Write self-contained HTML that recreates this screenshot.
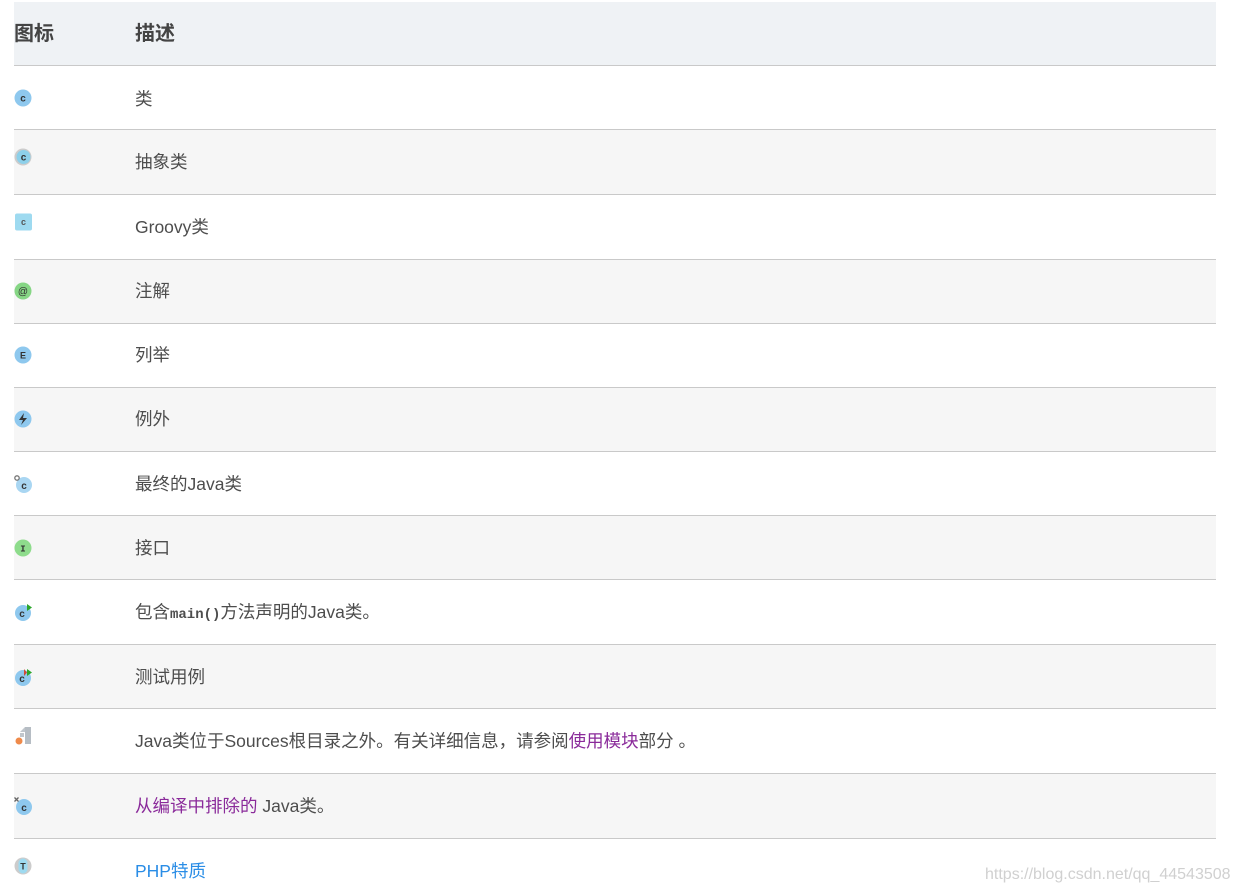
<!DOCTYPE html>
<html><head><meta charset="utf-8"><style>
body{margin:0;width:1239px;height:894px;background:#fff;position:relative;overflow:hidden;font-family:"Liberation Sans","Noto Sans CJK SC",sans-serif;color:#4d4d4d}
.r{position:absolute;left:14px;width:1202px;border-bottom:1px solid #c9c9c9}
.t{position:absolute;left:135px;font-size:17.5px;line-height:20px}
.i{position:absolute;left:14px;width:18px;height:18px}
.wm{position:absolute;left:985px;top:866px;font-size:16px;color:#d0d0d0}
a{color:#8a2a9a;text-decoration:none}
</style></head><body>
<div class="r" style="top:2px;height:63px;background:#eff2f5"></div>
<div class="t" style="left:14px;top:24px;font-weight:bold;font-size:20px;color:#444">图标</div>
<div class="t" style="top:24px;font-weight:bold;font-size:20px;color:#444">描述</div>

<div class="r" style="top:66px;height:63px"></div>
<div class="r" style="top:130px;height:64px;background:#f6f6f6"></div>
<div class="r" style="top:195px;height:64px"></div>
<div class="r" style="top:260px;height:63px;background:#f6f6f6"></div>
<div class="r" style="top:324px;height:63px"></div>
<div class="r" style="top:388px;height:63px;background:#f6f6f6"></div>
<div class="r" style="top:452px;height:63px"></div>
<div class="r" style="top:516px;height:63px;background:#f6f6f6"></div>
<div class="r" style="top:580px;height:64px"></div>
<div class="r" style="top:645px;height:63px;background:#f6f6f6"></div>
<div class="r" style="top:709px;height:64px"></div>
<div class="r" style="top:774px;height:64px;background:#f6f6f6"></div>

<svg class="i" style="top:89px" viewBox="0 0 18 18"><circle cx="9" cy="9" r="8.5" fill="#8ec8ee"/><text x="9" y="12.5" font-size="10" font-weight="bold" text-anchor="middle" fill="#333" font-family="Liberation Sans">c</text></svg>
<div class="t" style="top:89px">类</div>

<svg class="i" style="top:148px" viewBox="0 0 18 18"><circle cx="9" cy="9" r="8.5" fill="#ccc"/><circle cx="9.5" cy="9" r="7" fill="#8dd0ea"/><text x="9.5" y="12.5" font-size="10" font-weight="bold" text-anchor="middle" fill="#333" font-family="Liberation Sans">c</text></svg>
<div class="t" style="top:152px">抽象类</div>

<svg class="i" style="top:213px" viewBox="0 0 18 18"><rect x="1" y="0.5" width="17" height="17" rx="2" fill="#9edaf0"/><text x="9.5" y="12" font-size="9" font-weight="bold" text-anchor="middle" fill="#555" font-family="Liberation Sans">c</text></svg>
<div class="t" style="top:217px">Groovy类</div>

<svg class="i" style="top:282px" viewBox="0 0 18 18"><circle cx="9" cy="9" r="8.5" fill="#86d685"/><text x="9" y="12.5" font-size="10" text-anchor="middle" fill="#333" font-family="Liberation Sans">@</text></svg>
<div class="t" style="top:281px">注解</div>

<svg class="i" style="top:346px" viewBox="0 0 18 18"><circle cx="9" cy="9" r="8.5" fill="#8ec8ee"/><text x="9" y="12.5" font-size="9" font-weight="bold" text-anchor="middle" fill="#333" font-family="Liberation Sans">E</text></svg>
<div class="t" style="top:345px">列举</div>

<svg class="i" style="top:410px" viewBox="0 0 18 18"><circle cx="9" cy="9" r="8.5" fill="#8ec8ee"/><path d="M10 3 L5 10 L9 10 L7 15 L13 8 L9 8 Z" fill="#333"/></svg>
<div class="t" style="top:409px">例外</div>

<svg class="i" style="top:475px" viewBox="0 0 18 18"><circle cx="10" cy="10" r="8" fill="#a9d6f2"/><text x="10" y="14" font-size="10" font-weight="bold" text-anchor="middle" fill="#333" font-family="Liberation Sans">c</text><circle cx="3" cy="3" r="2.2" fill="none" stroke="#777" stroke-width="1.3"/></svg>
<div class="t" style="top:474px">最终的Java类</div>

<svg class="i" style="top:539px" viewBox="0 0 18 18"><circle cx="9" cy="9" r="8.5" fill="#8edc8c"/><text x="9" y="12.5" font-size="9" font-weight="bold" text-anchor="middle" fill="#333" font-family="Liberation Mono">I</text></svg>
<div class="t" style="top:538px">接口</div>

<svg class="i" style="top:603px" viewBox="0 0 18 18"><circle cx="9" cy="10" r="8" fill="#8ec8ee"/><text x="8" y="14" font-size="10" font-weight="bold" text-anchor="middle" fill="#333" font-family="Liberation Sans">c</text><path d="M13 1 L18 4.5 L13 8 Z" fill="#2aa62a"/></svg>
<div class="t" style="top:602px">包含<b style="font-family:'Liberation Mono',monospace;font-size:14px">main()</b>方法声明的Java类。</div>

<svg class="i" style="top:668px" viewBox="0 0 18 18"><circle cx="9" cy="10" r="8" fill="#8ec8ee"/><text x="8" y="14" font-size="10" font-weight="bold" text-anchor="middle" fill="#333" font-family="Liberation Sans">c</text><path d="M10 1 L13 4.5 L10 8 Z" fill="#d04a3a"/><path d="M13 1 L18 4.5 L13 8 Z" fill="#2aa62a"/></svg>
<div class="t" style="top:667px">测试用例</div>

<svg class="i" style="top:727px" viewBox="0 0 18 18"><path d="M6 5 L11 0 L11 5 Z" fill="#c0c6cc"/><rect x="11" y="0" width="6" height="17" fill="#b6bdc4"/><rect x="6" y="6" width="4" height="4" fill="#c0c6cc"/><circle cx="5" cy="14" r="3.5" fill="#ef8a4a"/></svg>
<div class="t" style="top:731px">Java类位于Sources根目录之外。有关详细信息，请参阅<a>使用模块</a>部分 。</div>

<svg class="i" style="top:797px" viewBox="0 0 18 18"><circle cx="10" cy="10" r="8" fill="#8ec8ee"/><text x="10" y="14" font-size="10" font-weight="bold" text-anchor="middle" fill="#333" font-family="Liberation Sans">c</text><path d="M0.5 0.5 L4.5 4.5 M4.5 0.5 L0.5 4.5" stroke="#666" stroke-width="1.3"/></svg>
<div class="t" style="top:796px"><a>从编译中排除的</a> Java类。</div>

<svg class="i" style="top:857px" viewBox="0 0 18 18"><circle cx="9" cy="9" r="8.5" fill="#ccc"/><rect x="4.5" y="1.5" width="9" height="15" rx="4.5" fill="#9edaf0"/><text x="9" y="12.5" font-size="9" font-weight="bold" text-anchor="middle" fill="#333" font-family="Liberation Sans">T</text></svg>
<div class="t" style="top:861px;color:#2a8de6">PHP特质</div>

<div class="wm">https://blog.csdn.net/qq_44543508</div>
</body></html>
